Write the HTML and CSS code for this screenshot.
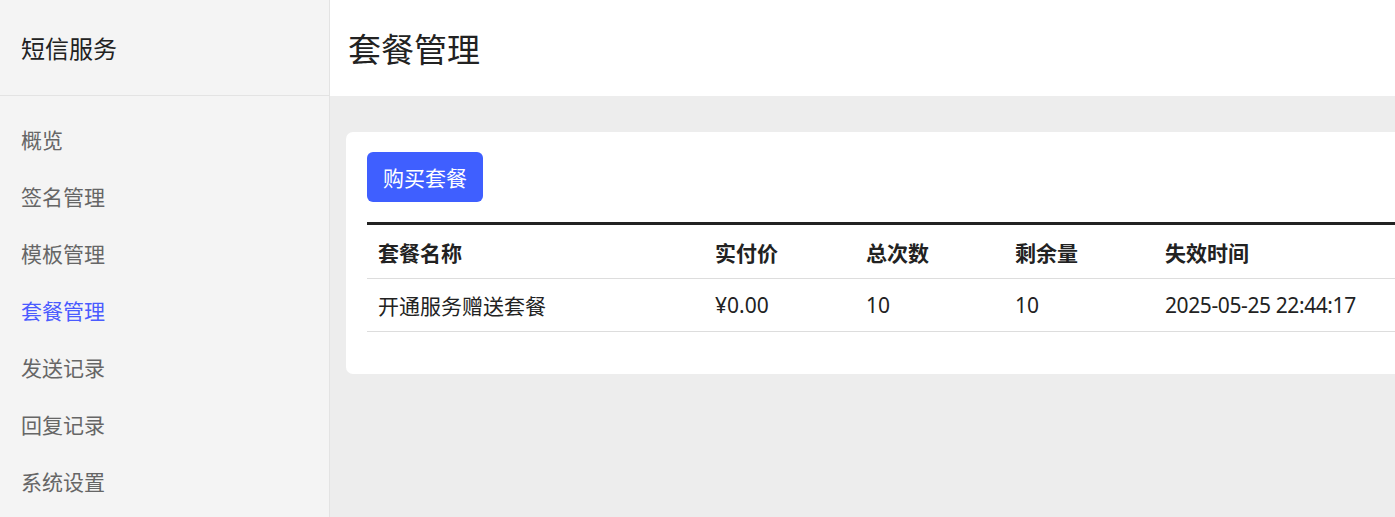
FILE: index.html
```html
<!DOCTYPE html>
<html lang="zh-CN">
<head>
<meta charset="utf-8">
<title>套餐管理</title>
<link rel="stylesheet" href="styles.css">
</head>
<body>
<div class="layout">
  <aside class="sidebar">
    <div class="brand">短信服务</div>
    <nav class="nav">
      <a class="nav-item">概览</a>
      <a class="nav-item">签名管理</a>
      <a class="nav-item">模板管理</a>
      <a class="nav-item active">套餐管理</a>
      <a class="nav-item">发送记录</a>
      <a class="nav-item">回复记录</a>
      <a class="nav-item">系统设置</a>
    </nav>
  </aside>
  <main class="main">
    <header class="page-header"><h1>套餐管理</h1></header>
    <section class="content">
      <div class="card">
        <button class="btn">购买套餐</button>
        <table class="table">
          <thead>
            <tr><th class="c1">套餐名称</th><th class="c2">实付价</th><th class="c3">总次数</th><th class="c4">剩余量</th><th>失效时间</th></tr>
          </thead>
          <tbody>
            <tr><td>开通服务赠送套餐</td><td>¥0.00</td><td>10</td><td>10</td><td class="num">2025-05-25 22:44:17</td></tr>
          </tbody>
        </table>
      </div>
    </section>
  </main>
</div>
</body>
</html>
```
FILE: styles.css
```css
* { box-sizing: border-box; }
html, body { margin: 0; padding: 0; height: 100%; overflow: hidden; }
body {
  font-family: "Noto Sans", "Noto Sans CJK SC", sans-serif;
  color: #222;
  background: #ededed;
}
.layout { display: flex; height: 100%; }
.sidebar {
  width: 330px;
  flex: 0 0 330px;
  background: #f4f4f4;
  border-right: 1px solid #e3e3e3;
}
.brand {
  height: 96px;
  display: flex;
  align-items: center;
  padding-left: 21px;
  font-size: 24px;
  color: #222;
  border-bottom: 1px solid #e3e3e3;
}
.nav { display: flex; flex-direction: column; padding-top: 14px; }
.nav-item {
  height: 57px;
  display: flex;
  align-items: center;
  padding-left: 21px;
  font-size: 21px;
  color: #666;
}
.nav-item.active { color: #4a5bff; }
.main { flex: 1; min-width: 0; display: flex; flex-direction: column; }
.page-header {
  height: 96px;
  background: #fff;
  display: flex;
  align-items: center;
  padding-left: 18px;
}
.page-header h1 { margin: 0; font-size: 33px; font-weight: 400; color: #222; }
.content { padding: 36px 0 0 16px; }
.card {
  width: 1200px;
  background: #fff;
  border-radius: 7px;
  padding: 20px 21px 42px;
}
.btn {
  height: 50px;
  padding: 0 16px;
  border: 0;
  border-radius: 6px;
  background: #3f5fff;
  color: #fff;
  font-family: inherit;
  font-size: 21px;
}
.table {
  width: 100%;
  margin-top: 20px;
  border-collapse: collapse;
  border-top: 3px solid #222;
  font-size: 21px;
}
.table th, .table td {
  text-align: left;
  padding: 0 11px;
  border-bottom: 1px solid #ddd;
}
.table th { height: 55px; font-weight: 700; }
.table td { height: 53px; }
.num { letter-spacing: -0.4px; }
.c1 { width: 337px; }
.c2 { width: 151px; }
.c3 { width: 149px; }
.c4 { width: 150px; }
```
